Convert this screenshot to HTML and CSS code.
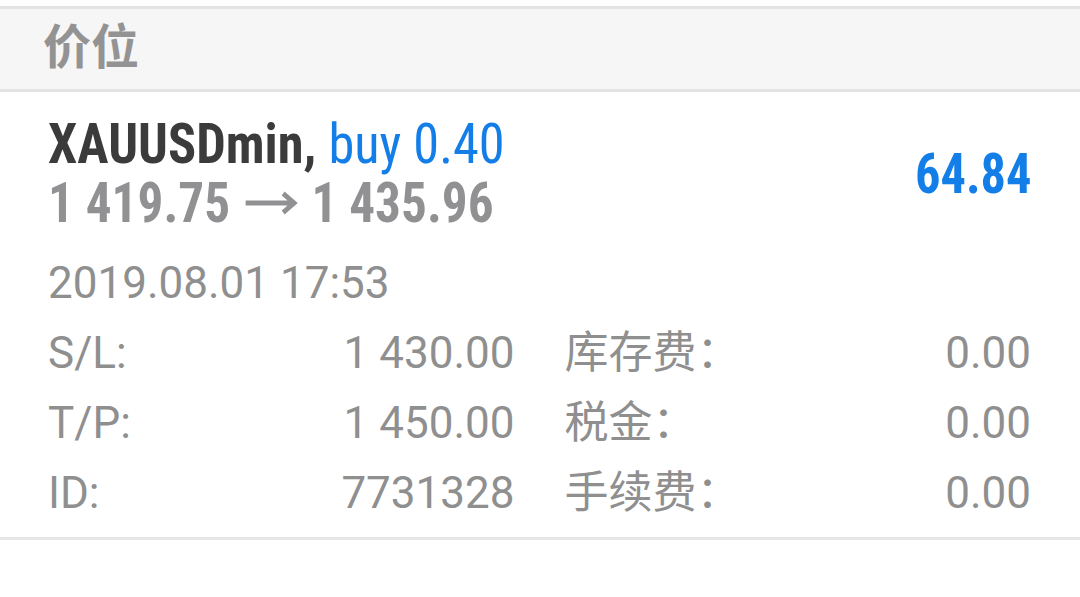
FILE: index.html
```html
<!DOCTYPE html>
<html lang="zh-CN">
<head>
    <meta charset="UTF-8">
    <meta name="viewport" content="width=device-width, initial-scale=1.0">
    <title>价位</title>
    <link rel="stylesheet" href="styles.css">
</head>
<body>
    <div class="top-gap"></div>

    <section class="section-head">
        <h2>价位</h2>
    </section>

    <section class="position">
        <div class="position-head">
            <div class="position-title">
                <div class="symbol">XAUUSDmin, <span class="deal">buy 0.40</span></div>
                <div class="prices">1 419.75<svg class="arrow" width="58" height="24" viewBox="0 0 58 24"><path d="M1 12H54M42 2.5L54 12L42 21.5" fill="none" stroke="#919193" stroke-width="5"/></svg>1 435.96</div>
            </div>
            <div class="profit">64.84</div>
        </div>

        <div class="open-time">2019.08.01 17:53</div>

        <div class="details">
            <div class="detail"><span>S/L:</span><span>1 430.00</span></div>
            <div class="detail"><span>库存费：</span><span>0.00</span></div>
            <div class="detail"><span>T/P:</span><span>1 450.00</span></div>
            <div class="detail"><span>税金：</span><span>0.00</span></div>
            <div class="detail"><span>ID:</span><span>7731328</span></div>
            <div class="detail"><span>手续费：</span><span>0.00</span></div>
        </div>
    </section>
</body>
</html>
```

FILE: styles.css
```css
* {
    box-sizing: border-box;
    margin: 0;
    padding: 0;
}

body {
    font-family: Roboto, "Noto Sans CJK SC", sans-serif;
    background: #fff;
    color: #8f8f8f;
}

.top-gap {
    height: 6px;
}

/* Section header */
.section-head {
    height: 86px;
    background: #f6f6f6;
    border-top: 3px solid #e3e3e3;
    border-bottom: 3px solid #e3e3e3;
    padding-left: 43px;
}

.section-head h2 {
    font-family: "Noto Sans CJK SC", sans-serif;
    font-size: 48px;
    font-weight: 700;
    line-height: 69px;
    color: #939393;
}

/* Position card */
.position {
    padding: 23px 49px 9px 48px;
    border-bottom: 3px solid #e6e6e6;
}

.position-head {
    display: flex;
    justify-content: space-between;
    align-items: center;
}

/* condensed width, narrowed a bit more by hand */
.position-title {
    font-stretch: condensed;
    font-size: 56px;
    line-height: 59px;
    font-weight: 700;
}

.symbol {
    color: #3b3b3b;
    white-space: nowrap;
    transform: scaleX(0.935);
    transform-origin: left;
}

.deal {
    color: #137ee8;
    font-weight: 400;
}

.prices {
    color: #919193;
    white-space: nowrap;
    transform: scaleX(0.915);
    transform-origin: left;
}

.arrow {
    margin: 0 15px 0 16px;
    vertical-align: 7px;
}

.profit {
    font-stretch: condensed;
    font-size: 56px;
    font-weight: 700;
    color: #137ee8;
    transform: scaleX(0.9);
    transform-origin: right;
}

.open-time {
    margin-top: 16px;
    font-size: 44px;
    line-height: 69px;
}

.details {
    display: grid;
    grid-template-columns: 1fr 1fr;
    column-gap: 50px;
    font-size: 44px;
    line-height: 70px;
}

.detail {
    display: flex;
    justify-content: space-between;
}
```
